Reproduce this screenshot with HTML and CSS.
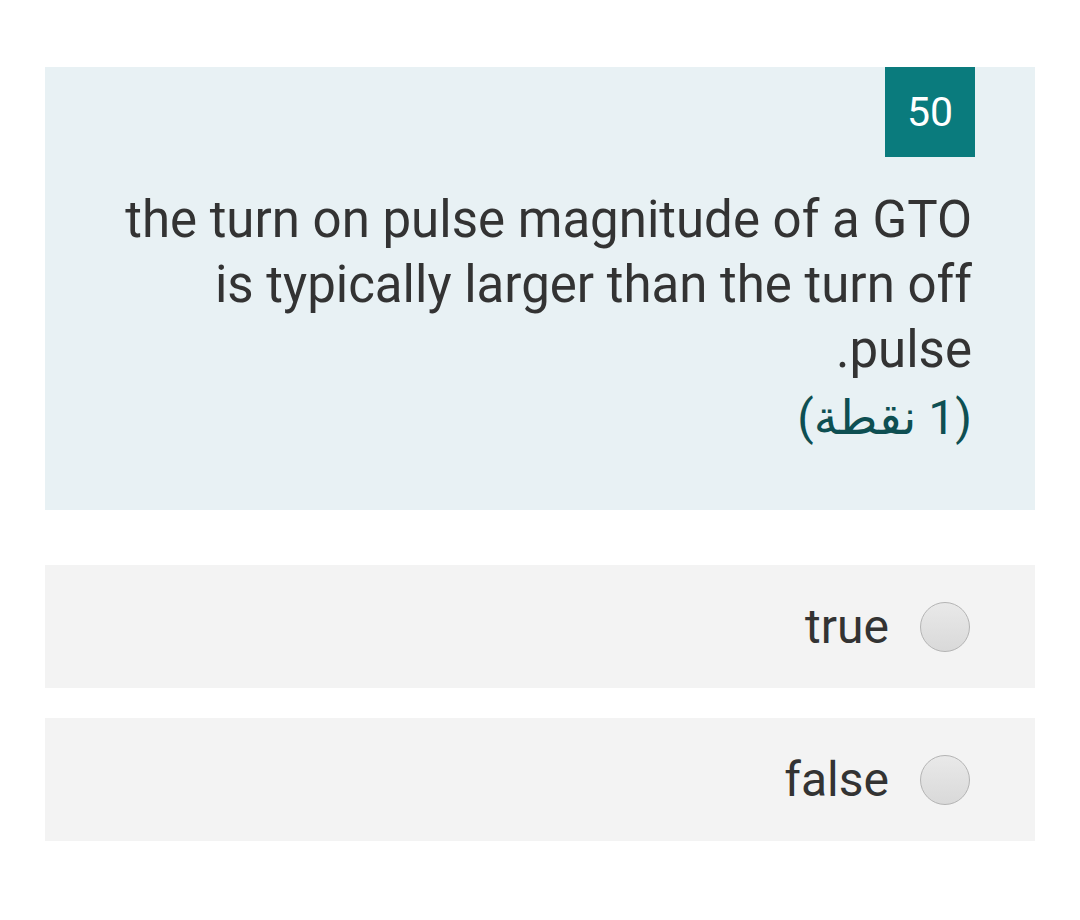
FILE: index.html
```html
<!DOCTYPE html>
<html lang="ar" dir="rtl">
<head>
<meta charset="utf-8">
<link rel="stylesheet" href="styles.css">
</head>
<body>
<div class="page">
  <div class="question">
    <div class="badge-row"><span class="badge">50</span></div>
    <div class="qtext" dir="rtl">the turn on pulse magnitude of a GTO is typically larger than the turn off pulse.</div>
    <div class="points">(1 نقطة)</div>
  </div>
  <label class="option">
    <span class="radio"></span>
    <span class="label">true</span>
  </label>
  <label class="option">
    <span class="radio"></span>
    <span class="label">false</span>
  </label>
</div>
</body>
</html>
```
FILE: styles.css
```css
html, body {
  margin: 0;
  padding: 0;
  background: #ffffff;
}
body {
  font-family: Roboto, "Noto Sans", "DejaVu Sans", sans-serif;
  color: #333333;
}
.page {
  padding: 67px 45px 0 45px;
  display: flex;
  flex-direction: column;
}
.question {
  background: #e8f1f4;
  height: 443px;
  box-sizing: border-box;
  padding: 0 63px 0 67px;
  display: flex;
  flex-direction: column;
}
.badge-row {
  display: flex;
  margin-right: -3px;
}
.badge {
  width: 90px;
  height: 90px;
  background: #0a7b7d;
  color: #ffffff;
  font-size: 41px;
  display: flex;
  align-items: center;
  justify-content: center;
}
.qtext {
  margin-top: 30px;
  font-size: 51px;
  line-height: 65px;
  text-align: right;
  color: #333333;
}
.points {
  margin-top: 1px;
  font-size: 48px;
  line-height: 70px;
  color: #0e4f52;
  text-align: right;
}
.option {
  background: #f3f3f3;
  height: 123px;
  margin-top: 55px;
  display: flex;
  align-items: center;
  padding-right: 65px;
  gap: 31px;
}
.option + .option {
  margin-top: 30px;
}
.radio {
  width: 50px;
  height: 50px;
  border-radius: 50%;
  border: 1.5px solid #b4b4b4;
  background: linear-gradient(#e9e9e9, #d9d9d9);
  box-sizing: border-box;
  flex: none;
}
.label {
  font-size: 48px;
  color: #333333;
}
```
